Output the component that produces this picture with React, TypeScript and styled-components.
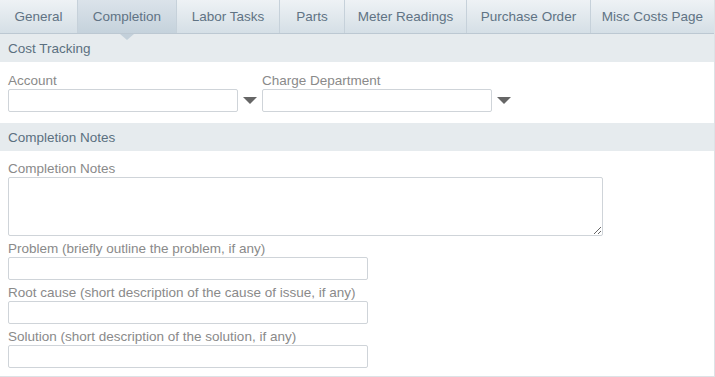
import React from 'react';
import styled, { createGlobalStyle } from 'styled-components';

const GlobalStyle = createGlobalStyle`
  html, body {
    margin: 0;
    padding: 0;
    background: #ffffff;
  }
  body {
    font-family: Tahoma, "Liberation Sans", Arial, sans-serif;
  }
`;

const Page = styled.div`
  width: 715px;
  height: 377px;
  box-sizing: border-box;
  border-right: 1px solid #dde2e6;
  border-bottom: 1px solid #dde2e6;
  background: #ffffff;
  overflow: hidden;
`;

const TabBar = styled.div`
  display: flex;
  height: 33px;
  border-bottom: 1px solid #bcc8d2;
  background: linear-gradient(to bottom, #eef2f5 0%, #d5dfe6 100%);
`;

const Tab = styled.div<{ $active?: boolean; $width: number }>`
  position: relative;
  width: ${(p) => p.$width}px;
  flex: none;
  display: flex;
  align-items: center;
  justify-content: center;
  font-size: 13.5px;
  color: #607384;
  border-right: 1px solid #c6d1da;
  box-sizing: border-box;
  background: ${(p) =>
    p.$active ? 'linear-gradient(to bottom, #dbe3ea 0%, #c5d2dc 100%)' : 'transparent'};

  &:last-child {
    border-right: none;
  }

  ${(p) =>
    p.$active &&
    `
    &::after {
      content: '';
      position: absolute;
      left: 50%;
      bottom: -7px;
      margin-left: -7px;
      border-left: 7px solid transparent;
      border-right: 7px solid transparent;
      border-top: 6px solid #c3d0da;
      z-index: 2;
    }
  `}
`;

const SectionHeader = styled.div`
  height: 28px;
  display: flex;
  align-items: center;
  padding: 0 8px;
  background: #e6ebee;
  color: #5b7080;
  font-size: 13.5px;
`;

const SectionBody = styled.div<{ $top: number; $bottom: number }>`
  padding: ${(p) => p.$top}px 8px ${(p) => p.$bottom}px 8px;
`;

const FieldRow = styled.div`
  display: flex;
  gap: 5px;
`;

const Field = styled.div<{ $spaced?: boolean }>`
  display: flex;
  flex-direction: column;
  margin-top: ${(p) => (p.$spaced ? 4 : 0)}px;
`;

const Label = styled.label`
  font-size: 13.5px;
  line-height: 16px;
  padding-top: 1px;
  color: #8a8a8a;
  white-space: nowrap;
`;

const InputWrap = styled.div`
  display: flex;
  align-items: center;
  gap: 4px;
`;

const TextInput = styled.input<{ $width: number }>`
  width: ${(p) => p.$width}px;
  height: 23px;
  box-sizing: border-box;
  border: 1px solid #cfd4d9;
  border-radius: 2px;
  padding: 0 4px;
  margin: 0;
  font-family: inherit;
  font-size: 13px;
  outline: none;
  background: #ffffff;
`;

const TextArea = styled.textarea`
  width: 595px;
  height: 59px;
  box-sizing: border-box;
  border: 1px solid #cfd4d9;
  border-radius: 2px;
  padding: 4px;
  margin: 0;
  display: block;
  font-family: inherit;
  font-size: 13px;
  outline: none;
  resize: both;
`;

const DropArrow = styled.span`
  display: inline-block;
  width: 0;
  height: 0;
  margin: 0 0 0 1px;
  border-left: 7px solid transparent;
  border-right: 7px solid transparent;
  border-top: 7px solid #666666;
`;

const tabs = [
  { label: 'General', width: 78 },
  { label: 'Completion', width: 99, active: true },
  { label: 'Labor Tasks', width: 103 },
  { label: 'Parts', width: 65 },
  { label: 'Meter Readings', width: 122 },
  { label: 'Purchase Order', width: 124 },
  { label: 'Misc Costs Page', width: 123 },
];

const App: React.FC = () => {
  return (
    <>
      <GlobalStyle />
      <Page>
        <TabBar>
          {tabs.map((t) => (
            <Tab key={t.label} $active={t.active} $width={t.width}>
              {t.label}
            </Tab>
          ))}
        </TabBar>

        <SectionHeader>Cost Tracking</SectionHeader>
        <SectionBody $top={10} $bottom={11}>
          <FieldRow>
            <Field>
              <Label>Account</Label>
              <InputWrap>
                <TextInput $width={230} />
                <DropArrow />
              </InputWrap>
            </Field>
            <Field>
              <Label>Charge Department</Label>
              <InputWrap>
                <TextInput $width={230} />
                <DropArrow />
              </InputWrap>
            </Field>
          </FieldRow>
        </SectionBody>

        <SectionHeader>Completion Notes</SectionHeader>
        <SectionBody $top={9} $bottom={0}>
          <Field>
            <Label>Completion Notes</Label>
            <TextArea />
          </Field>
          <Field $spaced>
            <Label>Problem (briefly outline the problem, if any)</Label>
            <TextInput $width={360} />
          </Field>
          <Field $spaced>
            <Label>Root cause (short description of the cause of issue, if any)</Label>
            <TextInput $width={360} />
          </Field>
          <Field $spaced>
            <Label>Solution (short description of the solution, if any)</Label>
            <TextInput $width={360} />
          </Field>
        </SectionBody>
      </Page>
    </>
  );
};

export default App;
